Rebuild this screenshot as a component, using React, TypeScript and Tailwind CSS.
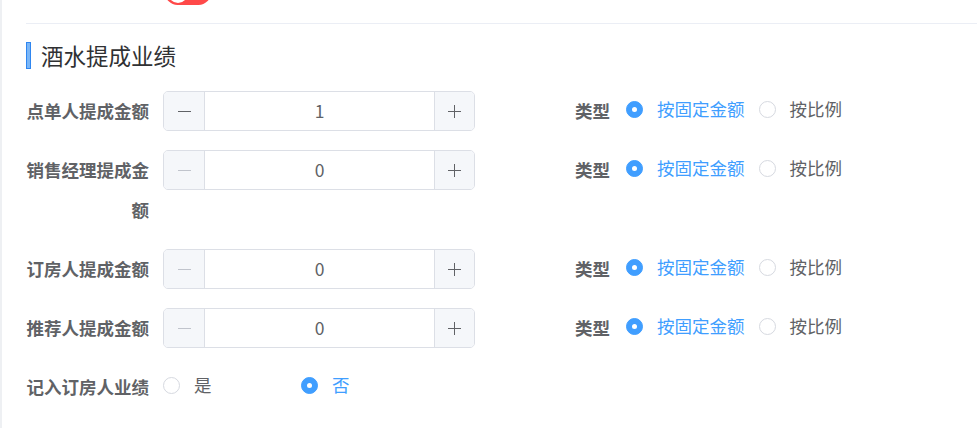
import React from 'react';

const font = { fontFamily: '"Noto Sans CJK SC", "Noto Sans", sans-serif' };

const Radio = ({ label, checked, className = '' }: { label: string; checked?: boolean; className?: string }) => (
  <label className={`flex items-center ${className}`}>
    {checked ? (
      <span className="w-[17px] h-[17px] rounded-full bg-[#409eff] border border-[#409eff] flex items-center justify-center">
        <span className="w-[5px] h-[5px] rounded-full bg-white" />
      </span>
    ) : (
      <span className="w-[17px] h-[17px] rounded-full bg-white border border-[#d6d9e0]" />
    )}
    <span className={`ml-[14px] text-[17.5px] leading-none ${checked ? 'text-[#409eff]' : 'text-[#606266]'}`}>{label}</span>
  </label>
);

const InputNumber = ({ value }: { value: number }) => {
  const minusDisabled = value <= 0;
  return (
    <div className="flex w-[312px] h-[40px] border border-[#dcdfe6] rounded-[5px] overflow-hidden bg-white shrink-0">
      <div className="w-[41px] bg-[#f5f7fa] border-r border-[#dcdfe6] flex items-center justify-center">
        <span className={`block w-[13px] h-px ${minusDisabled ? 'bg-[#c0c4cc]' : 'bg-[#606266]'}`} />
      </div>
      <div className="flex-1 flex items-center justify-center text-[17.5px] text-[#606266]">{value}</div>
      <div className="w-[40px] bg-[#f5f7fa] border-l border-[#dcdfe6] flex items-center justify-center relative">
        <span className="block w-[13px] h-px bg-[#606266]" />
        <span className="absolute w-px h-[13px] bg-[#606266]" />
      </div>
    </div>
  );
};

const rows = [
  { label: '点单人提成金额', value: 1 },
  { label: '销售经理提成金额', value: 0 },
  { label: '订房人提成金额', value: 0 },
  { label: '推荐人提成金额', value: 0 },
];

export default function App() {
  return (
    <div style={font} className="w-[977px] h-[428px] overflow-hidden bg-white border-l-2 border-[#eef0f3]">
      <div className="pl-[24px]">
        {/* clipped switch from the row above */}
        <div className="h-[5px] flex items-end">
          <div className="ml-[139px] shrink-0 w-[46px] h-[25px] rounded-full bg-[#ff4949] flex items-center pl-[2.5px]">
            <span className="w-[20px] h-[20px] rounded-full bg-white" />
          </div>
        </div>
        <div className="mt-[18px] border-t border-[#ebeef5]" />

        {/* section title */}
        <div className="mt-[18px] h-[27px] flex items-center">
          <span className="w-[5px] h-[27px] border-[1.5px] border-[#2f86f0] bg-[#7ab6f7]" />
          <span className="ml-[10px] text-[22.5px] text-[#303133] leading-none">酒水提成业绩</span>
        </div>

        <div className="mt-[22px] flex flex-col gap-[19px]">
          {rows.map((r) => (
            <div key={r.label} className="flex items-start">
              <div className="w-[137px] pr-[14px] text-right text-[17.5px] leading-[40px] font-bold text-[#606266] break-all">
                {r.label}
              </div>
              <InputNumber value={r.value} />
              <div className="w-[151px] pr-[16px] text-right text-[17.5px] leading-[40px] font-bold text-[#606266]">类型</div>
              <div className="h-[40px] pb-[4px] flex items-center">
                <Radio label="按固定金额" checked className="mr-[14px]" />
                <Radio label="按比例" />
              </div>
            </div>
          ))}
          <div className="flex items-start">
            <div className="w-[137px] pr-[14px] text-right text-[17.5px] leading-[40px] font-bold text-[#606266]">记入订房人业绩</div>
            <div className="h-[40px] pb-[4px] flex items-center">
              <Radio label="是" className="w-[138px]" />
              <Radio label="否" checked />
            </div>
          </div>
        </div>
      </div>
    </div>
  );
}
